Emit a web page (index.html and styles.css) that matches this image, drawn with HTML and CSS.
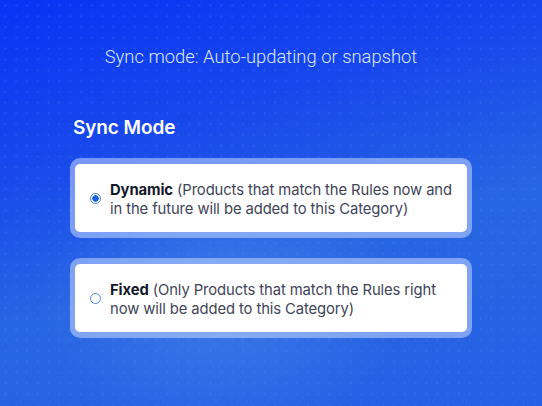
FILE: index.html
```html
<!DOCTYPE html>
<html>
<head>
<meta charset="utf-8">
<link rel="stylesheet" href="styles.css">
</head>
<body>
<div class="stage">
  <h1 class="headline">Sync mode: Auto-updating or snapshot</h1>
  <section class="panel">
    <h2 class="panel-title">Sync Mode</h2>
    <div class="option">
      <div class="option-inner">
        <span class="radio radio-on"></span>
        <p class="option-text"><span class="line"><b>Dynamic</b> (Products that match the Rules now and</span><span class="line">in the future will be added to this Category)</span></p>
      </div>
    </div>
    <div class="option">
      <div class="option-inner">
        <span class="radio"></span>
        <p class="option-text"><span class="line"><b>Fixed</b> (Only Products that match the Rules right</span><span class="line">now will be added to this Category)</span></p>
      </div>
    </div>
  </section>
</div>
</body>
</html>
```
FILE: styles.css
```css
html, body {
  margin: 0;
  padding: 0;
  width: 542px;
  height: 406px;
  overflow: hidden;
}
.stage {
  position: relative;
  width: 542px;
  height: 406px;
  box-sizing: border-box;
  padding-top: 45px;
  background:
    radial-gradient(circle, rgba(120,150,255,0.22) 0.8px, transparent 1.3px) 0 0 / 10.8px 10.8px,
    radial-gradient(ellipse 260px 200px at 220px 300px, rgba(80,140,235,0.5), transparent 70%),
    linear-gradient(165deg, #0733f4 0%, #1747ec 30%, #2766e2 60%, #2560e6 100%);
  font-family: Inter, "Open Sans", sans-serif;
}
.headline {
  margin: 0;
  padding-right: 20px;
  text-align: center;
  font-family: Roboto, sans-serif;
  font-weight: 300;
  font-size: 18.4px;
  line-height: 24px;
  color: #dbe6ff;
}
.panel {
  margin: 0 70px;
  padding-top: 46px;
  display: flex;
  flex-direction: column;
  gap: 20px;
}
.panel-title {
  margin: 0 0 2px 3px;
  font-family: Inter, sans-serif;
  font-weight: 600;
  font-size: 19px;
  line-height: 26px;
  color: #ffffff;
  letter-spacing: -0.1px;
}
.panel-title + .option {
  margin-top: -5px;
}
.option {
  padding: 6px 5px;
  border-radius: 10px;
  background: rgba(200, 215, 255, 0.55);
}
.option-inner {
  display: flex;
  align-items: center;
  gap: 9px;
  background: #ffffff;
  border-radius: 5px;
  padding: 3px 10px 0 15px;
  height: 68px;
  box-sizing: border-box;
}
.radio {
  flex: none;
  width: 11px;
  height: 11px;
  margin-top: -3px;
  border-radius: 50%;
  box-sizing: border-box;
  border: 1.2px solid #4a86f0;
  background: #fff;
}
.radio-on {
  border: 1.5px solid #3e7ef2;
  background: radial-gradient(circle, #1c5fe8 0 3px, #fff 3.4px);
}
.option-text {
  margin: 0;
  font-size: 14.8px;
  line-height: 19px;
  color: #414458;
  letter-spacing: -0.1px;
}
.line {
  display: block;
  white-space: nowrap;
}
.option-text b {
  font-weight: 700;
  color: #141829;
}
```
